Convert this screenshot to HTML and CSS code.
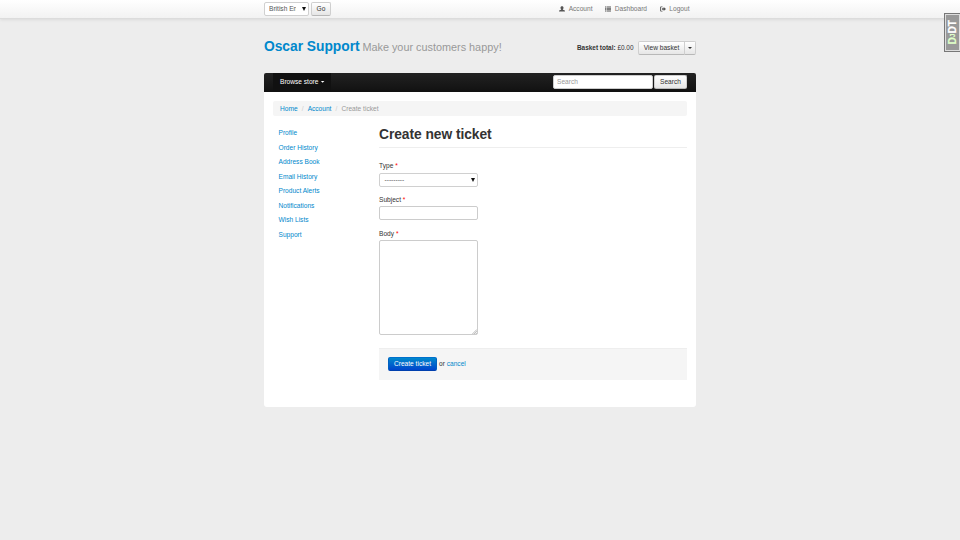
FILE: index.html
```html
<!DOCTYPE html>
<html lang="en-GB">
<head>
<meta charset="utf-8">
<title>Create new ticket</title>
<link rel="stylesheet" href="styles.css">
</head>
<body>
<div class="topbar">
  <div class="container topbar-inner">
    <div class="lang">
      <div class="select lang-select"><span>British En</span><i class="arrow"></i></div>
      <button class="btn go">Go</button>
    </div>
    <nav class="usernav">
      <a><svg viewBox="0 0 12 12"><path d="M6 .5c1.900 0 3 1.200 3 2.900C9 5 8.200 6.300 7.800 6.700v.8l3.200 1c.6.300 1 1.200 1 2.500H0c0-1.300.4-2.200 1-2.500l3.200-1v-.8C3.800 6.300 3 5 3 3.400 3 1.700 4.100.5 6 .5z"/></svg><span>Account</span></a>
      <a><svg viewBox="0 0 12 12"><path d="M0 1h2v2H0zM3 1h9v2H3zM0 4h2v1.700H0zM3 4h9v1.700H3zM0 6.700h2v1.700H0zM3 6.700h9v1.700H3zM0 9.400h2V11H0zM3 9.400h9V11H3z"/></svg><span>Dashboard</span></a>
      <a><svg viewBox="0 0 12 12"><path d="M5 1H2.500C1 1 .3 1.800.3 3v6c0 1.200.7 2 2.200 2H5V9.500H2.700C2.100 9.500 2 9.300 2 8.800V3.200c0-.5.1-.7.7-.7H5zM7.300 1.800 12 6l-4.700 4.200V7.500H3.700v-3h3.600z"/></svg><span>Logout</span></a>
    </nav>
  </div>
</div>
<div class="djdt"><span><b>D<small>J</small></b>DT</span></div>
<header class="container header">
  <div class="brand"><a>Oscar Support</a> <span>Make your customers happy!</span></div>
  <div class="basket"><span class="total"><strong>Basket total:</strong> £0.00</span><div class="group"><button class="btn view">View basket</button><button class="btn drop"><i class="caret"></i></button></div></div>
</header>
<main class="container page">
  <div class="navbar">
    <a class="browse">Browse store <i class="caret"></i></a>
    <div class="search"><input type="text" placeholder="Search"><button class="btn">Search</button></div>
  </div>
  <div class="crumbs"><a>Home</a><i>/</i><a>Account</a><i>/</i><span>Create ticket</span></div>
  <div class="row">
    <nav class="side">
      <a>Profile</a><a>Order History</a><a>Address Book</a><a>Email History</a><a>Product Alerts</a><a>Notifications</a><a>Wish Lists</a><a>Support</a>
    </nav>
    <section class="content">
      <h1>Create new ticket</h1>
      <form>
        <label>Type <em>*</em></label>
        <div class="select type-select"><span>---------</span><i class="arrow"></i></div>
        <label>Subject <em>*</em></label>
        <div class="field"></div>
        <label>Body <em>*</em></label>
        <div class="field area"><svg viewBox="0 0 6 6"><path d="M.5 6 6 .5M2.500 6 6 2.500M4.500 6 6 4.500"/></svg></div>
        <div class="actions"><button class="btn primary" type="button">Create ticket</button><span>or <a>cancel</a></span></div>
      </form>
    </section>
  </div>
</main>
</body>
</html>
```
FILE: styles.css
```css
* { box-sizing: border-box; }
body {
  margin: 0;
  height: 540px;
  overflow: hidden;
  background: #ededed;
  font: 6.6px/9.2px "Liberation Sans", Arial, sans-serif;
  color: #333;
}
a { color: #0088cc; }
i, em { font-style: normal; }
.container { width: 432px; margin: 0 auto; }
.btn {
  font: inherit;
  color: #333;
  margin: 0;
  padding: 0 5px;
  height: 14px;
  border: 1px solid #cfcfcf;
  border-bottom-color: #b8b8b8;
  border-radius: 2px;
  background: linear-gradient(#fff, #e6e6e6);
  display: flex;
  align-items: center;
  justify-content: center;
  white-space: nowrap;
}
.topbar {
  height: 19px;
  background: linear-gradient(#fff, #f2f2f2);
  border-bottom: 1px solid #dcdcdc;
  box-shadow: 0 1px 3px rgba(0, 0, 0, .08);
}
.topbar-inner { display: flex; justify-content: space-between; }
.lang { display: flex; gap: 2px; padding-top: 2px; }
.select {
  display: flex;
  align-items: center;
  justify-content: space-between;
  background: #fff;
  border: 1px solid #d0d0d0;
  border-radius: 2px;
  color: #555;
  height: 14px;
  padding: 0 2px 0 4.500px;
}
.lang-select { width: 45px; padding-left: 4px; }
.lang-select span { width: 27px; overflow: hidden; white-space: nowrap; }
.arrow {
  border: 2px solid transparent;
  border-top: 4px solid #111;
  border-bottom: 0;
}
.go { width: 20px; }
.usernav { display: flex; gap: 13px; padding: 4.500px 6.500px 0 0; }
.usernav a { display: flex; align-items: center; height: 9px; color: #777; }
.usernav svg { width: 6px; height: 6px; margin-right: 3.300px; fill: #555; }
.djdt {
  position: absolute;
  top: 13px;
  right: 0;
  width: 16px;
  height: 39px;
  border: 1px solid #777;
  border-right: 0;
  background: #999;
  box-shadow: inset 0 0 0 1px #ddd;
  display: flex;
  align-items: center;
  justify-content: center;
}
.djdt span {
  writing-mode: vertical-rl;
  transform: rotate(180deg);
  font-size: 10.200px;
  line-height: 10px;
  font-weight: bold;
  color: #fff;
  -webkit-text-stroke: .2px currentColor;
}
.djdt b { color: #dfffc8; }
.djdt small { font-size: 6.500px; }
.header { height: 54px; display: flex; justify-content: space-between; }
.brand { padding-top: 20px; font-size: 13.800px; line-height: 16px; }
.brand a { font-size: 13.800px; font-weight: bold; letter-spacing: -.02px; }
.brand span { font-size: 10.850px; color: #999; margin-left: -1px; }
.basket { display: flex; align-items: flex-start; padding-top: 22px; }
.total { padding-top: 2px; margin-right: 4.500px; font-size: 6.450px; }
.group { display: flex; }
.view { width: 47px; border-radius: 2px 0 0 2px; }
.drop { width: 12px; margin-left: -1px; padding: 0; border-radius: 0 2px 2px 0; }
.caret {
  display: inline-block;
  width: 4px;
  height: 2px;
  background: currentColor;
  clip-path: polygon(0 0, 100% 0, 50% 100%);
  vertical-align: middle;
}
.page {
  height: 334px;
  background: #fff;
  border-radius: 3px;
}
.navbar {
  height: 18.500px;
  padding: 0 9px;
  background: linear-gradient(#222, #111);
  border-radius: 2px 2px 0 0;
  display: flex;
  justify-content: space-between;
}
.browse { width: 58px; padding: 4px 0 0 7px; background: #111; color: #fff; }
.browse .caret { margin: -1px 0 0 .3px; }
.search { display: flex; gap: 1px; padding-top: 2px; }
.search input {
  width: 100px;
  height: 14px;
  border: 1px solid #ccc;
  border-radius: 2px;
  padding: 0 3px 1px;
  font: inherit;
  background: #fff;
}
.search input::placeholder { color: #999; }
.search .btn { width: 33px; }
.crumbs {
  margin: 9px 9px 0;
  height: 15.500px;
  padding: 3px 7px;
  background: #f5f5f5;
  border-radius: 2px;
  color: #999;
}
.crumbs i { color: #ccc; margin: 0 4.100px; }
.row { display: flex; padding: 9.500px 9px 0; }
.side { width: 106px; padding: 2.500px 5.500px; }
.side a { display: block; height: 14.570px; }
.content { flex: 1; }
h1 {
  margin: 0;
  height: 22.500px;
  border-bottom: 1px solid #eee;
  font-size: 13.800px;
  line-height: 18px;
  letter-spacing: -.05px;
}
label { display: block; height: 11.500px; }
em { color: #f00; }
form { padding-top: 13px; }
.type-select { width: 99px; margin-bottom: 8px; }
.field {
  width: 99px;
  height: 14px;
  border: 1px solid #ccc;
  border-radius: 2px;
  margin-bottom: 8.500px;
}
.area { height: 95px; margin-bottom: 13px; display: flex; align-items: flex-end; justify-content: flex-end; }
.area svg { width: 5px; height: 5px; stroke: #999; fill: none; stroke-width: .8; }
.actions {
  height: 32px;
  padding: 8px 9px;
  background: #f5f5f5;
  border-top: 1px solid #eee;
  display: flex;
  gap: 2px;
}
.primary {
  width: 49px;
  color: #fff;
  background: linear-gradient(#0088cc, #0044cc);
  border-color: #0070cc #0060c0 #003fae;
}
.actions span { padding-top: 1.500px; }
```
